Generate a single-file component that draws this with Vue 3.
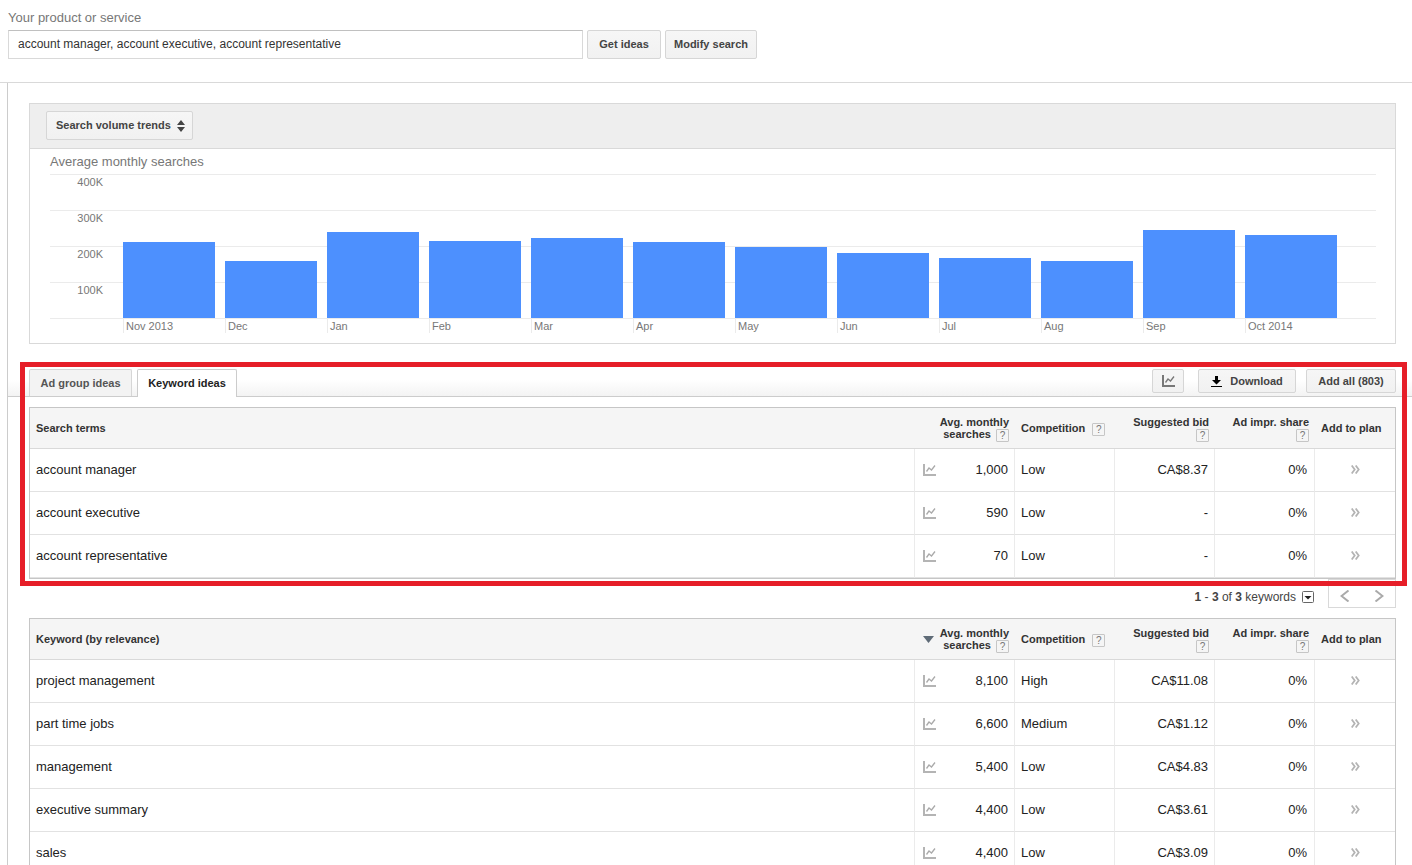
<script setup>
import { ref } from 'vue'

const query = ref('account manager, account executive, account representative')
const view = ref('trends')

const MAX = 400
const ticks = ['400K', '300K', '200K', '100K']
const months = [
  { label: 'Nov 2013', value: 211 },
  { label: 'Dec', value: 158 },
  { label: 'Jan', value: 239 },
  { label: 'Feb', value: 214 },
  { label: 'Mar', value: 222 },
  { label: 'Apr', value: 211 },
  { label: 'May', value: 197 },
  { label: 'Jun', value: 181 },
  { label: 'Jul', value: 167 },
  { label: 'Aug', value: 158 },
  { label: 'Sep', value: 244 },
  { label: 'Oct 2014', value: 231 }
]

const tables = [
  {
    id: 'terms',
    title: 'Search terms',
    sorted: false,
    rows: [
      ['account manager', '1,000', 'Low', 'CA$8.37', '0%'],
      ['account executive', '590', 'Low', '-', '0%'],
      ['account representative', '70', 'Low', '-', '0%']
    ]
  },
  {
    id: 'keywords',
    title: 'Keyword (by relevance)',
    sorted: true,
    rows: [
      ['project management', '8,100', 'High', 'CA$11.08', '0%'],
      ['part time jobs', '6,600', 'Medium', 'CA$1.12', '0%'],
      ['management', '5,400', 'Low', 'CA$4.83', '0%'],
      ['executive summary', '4,400', 'Low', 'CA$3.61', '0%'],
      ['sales', '4,400', 'Low', 'CA$3.09', '0%']
    ]
  }
]
</script>

<template>
  <div class="page">
    <form class="search" @submit.prevent>
      <label for="product">Your product or service</label>
      <div class="search-row">
        <input id="product" v-model="query" type="text" />
        <button class="btn get" type="submit">Get ideas</button>
        <button class="btn modify" type="button">Modify search</button>
      </div>
    </form>

    <main class="main">
      <section class="chart">
        <div class="chart-head">
          <div class="picker">
            <select v-model="view" class="btn" aria-label="Chart type">
              <option value="trends">Search volume trends</option>
            </select>
            <svg class="updown" width="8" height="12" viewBox="0 0 8 12" aria-hidden="true">
              <path d="M4 0 8 5H0zM4 12 0 7h8z" fill="#444" />
            </svg>
          </div>
        </div>
        <h2>Average monthly searches</h2>
        <div class="plot">
          <div v-for="t in ticks" :key="t" class="band"><span>{{ t }}</span></div>
          <div class="bars">
            <div
              v-for="m in months"
              :key="m.label"
              class="bar"
              :style="{ height: (m.value / MAX) * 100 + '%' }"
            ></div>
          </div>
        </div>
        <div class="months">
          <span v-for="m in months" :key="m.label">{{ m.label }}</span>
        </div>
      </section>

      <template v-for="t in tables" :key="t.id">
        <nav v-if="t.sorted" class="pager" aria-label="Pages">
          <span><b>1</b> - <b>3</b> of <b>3</b> keywords</span>
          <button class="drop" type="button" aria-label="Rows per page">
            <svg width="12" height="12" viewBox="0 0 12 12">
              <rect x=".5" y=".5" width="11" height="11" rx="1" fill="#fff" stroke="#666" />
              <path d="M2.500 5h7L6 8.500z" fill="#222" />
            </svg>
          </button>
          <div class="arrows">
            <button type="button" aria-label="Previous page">
              <svg width="10" height="12" viewBox="0 0 10 12">
                <path d="M8.500 .5 1.500 6l7 5.500" fill="none" stroke="#aaa" stroke-width="2" />
              </svg>
            </button>
            <button type="button" aria-label="Next page">
              <svg width="10" height="12" viewBox="0 0 10 12">
                <path d="M1.500 .5 8.500 6l-7 5.500" fill="none" stroke="#aaa" stroke-width="2" />
              </svg>
            </button>
          </div>
        </nav>

        <section :class="{ marked: !t.sorted }">
          <div v-if="!t.sorted" class="bar-line">
            <div class="tabs" role="tablist">
              <button class="tab" type="button" role="tab">Ad group ideas</button>
              <button class="tab active" type="button" role="tab" aria-selected="true">Keyword ideas</button>
            </div>
            <div class="actions">
              <button class="btn graph" type="button" aria-label="Show graph">
                <svg width="13" height="12" viewBox="0 0 13 12">
                  <path d="M1 0v11h12" fill="none" stroke="#777" stroke-width="2" />
                  <path d="M3.500 7.500 6 4l2.500 2L12 1.500" fill="none" stroke="#777" stroke-width="1.300" />
                </svg>
              </button>
              <button class="btn download" type="button">
                <svg width="11" height="11" viewBox="0 0 11 11" aria-hidden="true">
                  <path d="M4 0h3v4h3L5.500 8.500 1 4h3zM0 10h11v1H0z" fill="#000" />
                </svg>
                Download
              </button>
              <button class="btn add" type="button">Add all (803)</button>
            </div>
          </div>

          <div class="table-wrap">
            <table>
              <colgroup>
                <col />
                <col class="c" /><col class="c" /><col class="c" /><col class="c" /><col class="plan" />
              </colgroup>
              <thead>
                <tr>
                  <th class="name" scope="col">{{ t.title }}</th>
                  <th class="avg" scope="col">
                    <div class="avg-in">
                      <svg v-if="t.sorted" width="11" height="7" viewBox="0 0 11 7" aria-hidden="true">
                        <path d="M0 0h11L5.500 7z" fill="#5f6b77" />
                      </svg>
                      <div>Avg. monthly<br />searches <button class="q" type="button">?</button></div>
                    </div>
                  </th>
                  <th class="comp" scope="col">Competition <button class="q" type="button">?</button></th>
                  <th class="num" scope="col">Suggested bid<br /><button class="q" type="button">?</button></th>
                  <th class="num" scope="col">Ad impr. share<br /><button class="q" type="button">?</button></th>
                  <th class="add-col" scope="col">Add to plan</th>
                </tr>
              </thead>
              <tbody>
                <tr v-for="r in t.rows" :key="r[0]">
                  <td class="name">{{ r[0] }}</td>
                  <td>
                    <div class="vol">
                      <button type="button" aria-label="Monthly trend">
                        <svg width="13" height="12" viewBox="0 0 13 12">
                          <path d="M1 0v11h12" fill="none" stroke="#b4b4b4" stroke-width="2" />
                          <path d="M3.500 7.500 6 4l2.500 2L12 1.500" fill="none" stroke="#aaa" stroke-width="1.300" />
                        </svg>
                      </button>
                      <span>{{ r[1] }}</span>
                    </div>
                  </td>
                  <td class="comp">{{ r[2] }}</td>
                  <td class="num">{{ r[3] }}</td>
                  <td class="num share">{{ r[4] }}</td>
                  <td class="plan-cell">
                    <button type="button" aria-label="Add to plan">
                      <svg width="9" height="9" viewBox="0 0 9 9">
                        <path d="M.7 .5 3.700 4.500 .7 8.500M4.700 .5 7.700 4.500 4.700 8.500" fill="none" stroke="#b4b4b4" stroke-width="1.800" />
                      </svg>
                    </button>
                  </td>
                </tr>
              </tbody>
            </table>
          </div>
        </section>
      </template>
    </main>
  </div>
</template>

<style>
body {
  margin: 0;
  background: #fff;
}
</style>

<style scoped>
.page {
  box-sizing: border-box;
  height: 100vh;
  overflow: hidden;
  display: flex;
  flex-direction: column;
  font: 13px/16px "Liberation Sans", Arial, sans-serif;
  color: #222;
}
button {
  font: inherit;
  color: inherit;
  padding: 0;
  border: 0;
  background: none;
}
svg {
  display: block;
}
.search {
  padding: 10px 8px 23px;
  border-bottom: 1px solid #d9d9d9;
}
.search label {
  display: block;
  color: #777;
  margin-bottom: 4px;
}
.search-row {
  display: flex;
  gap: 4px;
}
.search-row input {
  box-sizing: border-box;
  width: 575px;
  height: 29px;
  padding: 0 9px 2px;
  border: 1px solid #d9d9d9;
  border-top-color: #c0c0c0;
  font: 12px "Liberation Sans", Arial, sans-serif;
  color: #333;
}
.btn {
  box-sizing: border-box;
  height: 29px;
  padding-bottom: 2px;
  border: 1px solid #d6d6d6;
  border-radius: 2px;
  background: linear-gradient(#f6f6f6, #f1f1f1);
  font: bold 11px "Liberation Sans", Arial, sans-serif;
  color: #444;
}
.get {
  width: 74px;
}
.modify {
  width: 92px;
}
.main {
  flex: none;
  margin-left: 7px;
  border-left: 1px solid #ccc;
  padding-top: 20px;
}
.chart {
  margin: 0 16px 25px 21px;
  border: 1px solid #d9d9d9;
}
.chart-head {
  padding: 7px 16px 8px;
  background: #eee;
  border-bottom: 1px solid #d9d9d9;
}
.picker {
  position: relative;
  width: 147px;
}
.picker select {
  display: block;
  width: 100%;
  appearance: none;
  padding: 0 9px 2px;
}
.updown {
  position: absolute;
  right: 8px;
  top: 9px;
  pointer-events: none;
}
h2 {
  margin: 0 20px;
  padding: 5px 0 4px;
  font-size: 13px;
  font-weight: normal;
  color: #777;
}
.plot {
  position: relative;
  margin: 0 19px 0 20px;
  border-bottom: 1px solid #ebebeb;
}
.band {
  box-sizing: border-box;
  height: 36px;
  border-top: 1px solid #ebebeb;
  font-size: 11px;
  line-height: 15px;
  color: #777;
}
.band span {
  display: block;
  width: 53px;
  text-align: right;
}
.bars {
  position: absolute;
  inset: 0 39px 0 73px;
  display: flex;
  gap: 10px;
  align-items: flex-end;
}
.bar {
  flex: 1;
  background: #4d90fe;
}
.months {
  display: flex;
  gap: 10px;
  margin: 0 58px 10px 93px;
  font-size: 11px;
  line-height: 14px;
  color: #777;
}
.months span {
  flex: 1;
  box-sizing: border-box;
  padding-left: 2px;
  border-left: 1px solid #ebebeb;
}
.marked {
  position: relative;
}
.marked::after {
  content: "";
  position: absolute;
  inset: -7px 5px -7px 12px;
  border: 5px solid #e61e28;
  pointer-events: none;
  z-index: 1;
}
.bar-line {
  display: flex;
  justify-content: space-between;
  height: 27px;
  padding: 0 16px 0 21px;
  margin-bottom: 10px;
  border-bottom: 1px solid #ccc;
  background: linear-gradient(#fff 40%, #f3f3f3);
}
.tabs {
  display: flex;
  gap: 5px;
}
.tab {
  box-sizing: border-box;
  width: 103px;
  height: 27px;
  border: 1px solid #d6d6d6;
  border-bottom: 0;
  border-radius: 2px 2px 0 0;
  background: #f3f3f3;
  font: bold 11px "Liberation Sans", Arial, sans-serif;
  color: #555;
}
.tab.active {
  width: 100px;
  height: 28px;
  padding-bottom: 1px;
  border-color: #ccc;
  background: #fff;
  color: #222;
}
.actions {
  display: flex;
}
.actions .btn {
  height: 24px;
  padding: 0;
  display: flex;
  align-items: center;
  justify-content: center;
}
.graph {
  width: 32px;
  margin-right: 14px;
}
.download {
  width: 98px;
  gap: 8px;
  margin-right: 10px;
}
.add {
  width: 90px;
}
.table-wrap {
  margin: 0 16px 0 21px;
  border: 1px solid #c6c6c6;
}
table {
  width: 100%;
  table-layout: fixed;
  border-collapse: separate;
  border-spacing: 0;
}
.c {
  width: 100px;
}
.plan {
  width: 81px;
}
th {
  box-sizing: border-box;
  height: 41px;
  padding: 0 5px;
  background: #f5f5f5;
  border-bottom: 1px solid #d9d9d9;
  font-size: 11px;
  line-height: 12px;
  text-align: right;
  white-space: nowrap;
  color: #333;
}
td {
  box-sizing: border-box;
  height: 43px;
  padding: 0 6px;
  border-left: 1px solid #ebebeb;
  border-bottom: 1px solid #e2e2e2;
}
th.name,
td.name {
  padding-left: 6px;
  text-align: left;
  border-left: 0;
}
.comp {
  text-align: left;
}
th.comp {
  padding-left: 7px;
}
.num {
  text-align: right;
}
td.share {
  padding-right: 7px;
}
th.add-col {
  text-align: left;
  padding: 0 0 0 7px;
}
.avg-in {
  display: flex;
  align-items: center;
  justify-content: flex-end;
  gap: 6px;
}
.q {
  box-sizing: border-box;
  width: 13px;
  height: 13px;
  margin: -1px 0 -2px 2px;
  border: 1px solid #c6c6c6;
  border-radius: 1px;
  font: 10px/11px "Liberation Sans", Arial, sans-serif;
  color: #777;
  text-align: center;
  vertical-align: middle;
}
th.comp .q {
  margin-left: 4px;
}
.vol {
  display: flex;
  align-items: center;
  justify-content: space-between;
  padding-left: 2px;
}
.plan-cell {
  padding-bottom: 2px;
  text-align: center;
}
.plan-cell button {
  vertical-align: middle;
}
.pager {
  display: flex;
  align-items: center;
  justify-content: flex-end;
  height: 29px;
  margin: 0 16px 10px 21px;
  font-size: 12px;
  color: #444;
}
.pager > span {
  padding-top: 7px;
}
.drop {
  margin: 7px 14px 0 6px;
}
.arrows {
  box-sizing: border-box;
  display: flex;
  justify-content: space-between;
  align-items: center;
  width: 68px;
  height: 29px;
  padding: 5px 11px 0;
  border: 1px solid #d9d9d9;
}
</style>
